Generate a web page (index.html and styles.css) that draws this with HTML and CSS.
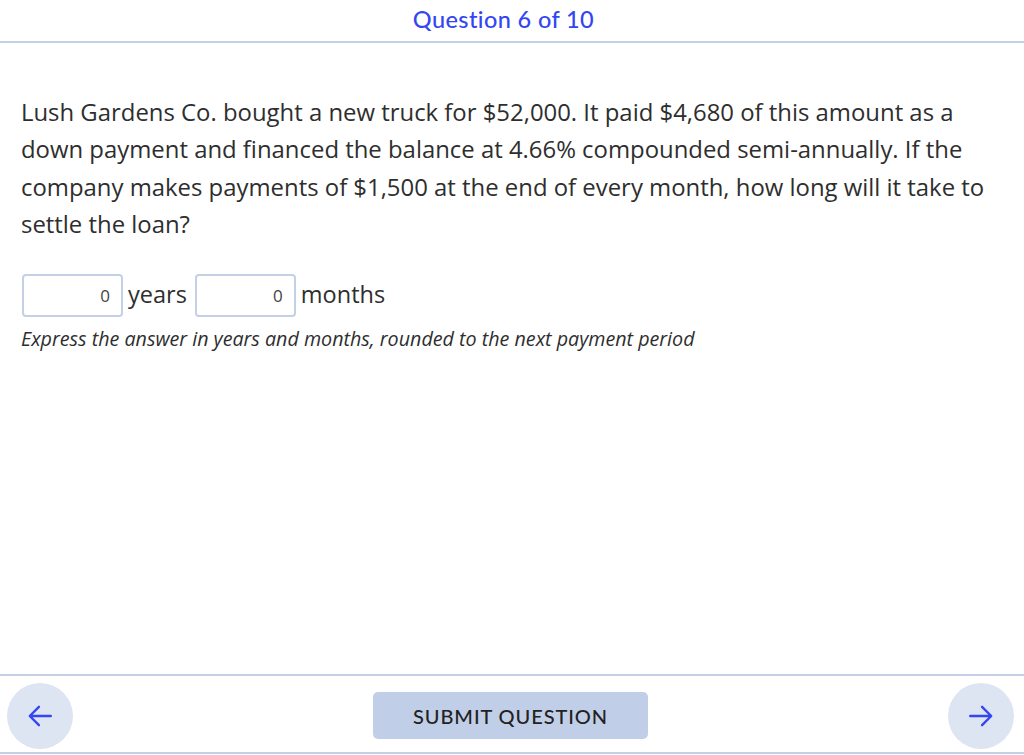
FILE: index.html
```html
<!DOCTYPE html>
<html>
<head>
<meta charset="utf-8">
<link rel="stylesheet" href="styles.css">
</head>
<body>
<div class="page">
  <header class="top">
    <h1 class="title">Question 6 of 10</h1>
  </header>
  <main class="content">
    <p class="question">Lush Gardens Co. bought a new truck for $52,000. It paid $4,680 of this amount as a down payment and financed the balance at 4.66% compounded semi-annually. If the company makes payments of $1,500 at the end of every month, how long will it take to settle the loan?</p>
    <div class="answer">
      <span class="box">0</span><span class="unit">years</span>
      <span class="box">0</span><span class="unit">months</span>
    </div>
    <p class="hint">Express the answer in years and months, rounded to the next payment period</p>
  </main>
  <footer class="bottom">
    <button class="nav" aria-label="Previous">
      <svg width="28" height="28" viewBox="0 0 26 26"><path d="M23 13H4M12 4.5L3.5 13L12 21.5" fill="none" stroke="#3346f2" stroke-width="2.2" stroke-linecap="round" stroke-linejoin="round"/></svg>
    </button>
    <button class="submit">SUBMIT QUESTION</button>
    <button class="nav" aria-label="Next">
      <svg width="28" height="28" viewBox="0 0 26 26"><path d="M3 13H22M14 4.5L22.5 13L14 21.5" fill="none" stroke="#3346f2" stroke-width="2.2" stroke-linecap="round" stroke-linejoin="round"/></svg>
    </button>
  </footer>
</div>
</body>
</html>
```

FILE: styles.css
```css
html, body {
  margin: 0;
  padding: 0;
  background: #fff;
}
.page {
  width: 1024px;
  height: 755px;
  display: flex;
  flex-direction: column;
  font-family: "Open Sans", sans-serif;
  color: #2e2e2e;
}
.top {
  height: 41px;
  border-bottom: 2px solid #c3d0e6;
  display: flex;
  justify-content: center;
  align-items: center;
  padding-right: 17px;
}
.title {
  margin: 0;
  font-family: Lato, sans-serif;
  font-weight: 500;
  font-size: 23.5px;
  color: #3346f2;
  letter-spacing: 0.4px;
  padding-bottom: 3px;
}
.content {
  flex: 1;
  padding: 0 21px;
}
.question {
  margin: 50px 0 0;
  font-size: 23.9px;
  line-height: 37.3px;
}
.answer {
  margin-top: 31px;
  display: flex;
  align-items: center;
  height: 44px;
}
.box {
  box-sizing: border-box;
  width: 101px;
  height: 43px;
  border: 2px solid #c3d0e6;
  border-radius: 4px;
  display: flex;
  align-items: center;
  justify-content: flex-end;
  padding-right: 11px;
  font-size: 17px;
  color: #444;
  margin-left: 1px;
}
.box + .unit + .box {
  margin-left: 0;
}
.unit {
  font-size: 23.5px;
  margin: 0 8px 0 5px;
  padding-bottom: 2px;
}
.hint {
  margin: 8px 0 0;
  font-size: 19.7px;
  font-style: italic;
  color: #2e2e2e;
}
.bottom {
  height: 76px;
  border-top: 2px solid #c3d0e6;
  border-bottom: 2px solid #c3d0e6;
  margin-bottom: 1px;
  display: flex;
  align-items: center;
  justify-content: space-between;
  padding: 0 10px 0 7px;
}
.nav {
  width: 66px;
  height: 66px;
  border-radius: 50%;
  border: none;
  background: #dde4f2;
  display: flex;
  align-items: center;
  justify-content: center;
  padding: 0;
  margin-top: 4px;
}
.submit {
  width: 275px;
  height: 47px;
  border: none;
  border-radius: 5px;
  background: #c0cfe7;
  font-family: Lato, sans-serif;
  font-size: 20px;
  font-weight: 500;
  letter-spacing: 0.9px;
  color: #222;
  margin-left: 0;
  margin-top: 3px;
}
```
